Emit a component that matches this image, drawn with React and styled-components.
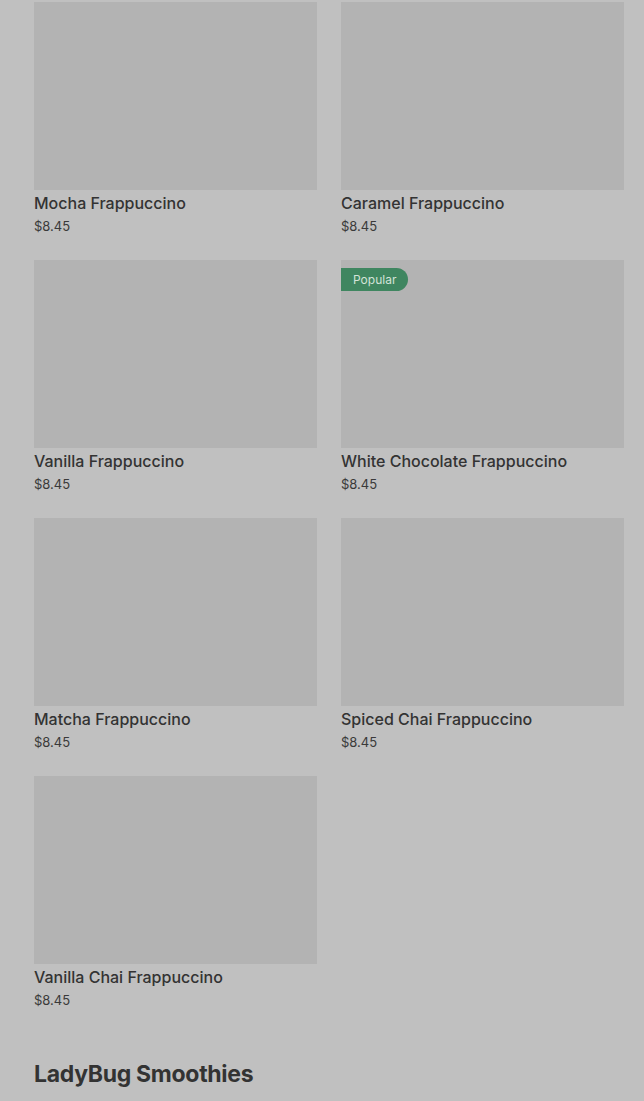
import styled, { createGlobalStyle } from "styled-components";

const items = [
    { name: "Mocha Frappuccino", price: "$8.45" },
    { name: "Caramel Frappuccino", price: "$8.45" },
    { name: "Vanilla Frappuccino", price: "$8.45" },
    { name: "White Chocolate Frappuccino", price: "$8.45", popular: true },
    { name: "Matcha Frappuccino", price: "$8.45" },
    { name: "Spiced Chai Frappuccino", price: "$8.45" },
    { name: "Vanilla Chai Frappuccino", price: "$8.45" },
];

export default function App() {
    return (
        <>
            <GlobalStyle />
            <Page>
                <Grid>
                    {items.map(item =>
                    <Card key={item.name}>
                        <Thumb>
                            {item.popular ? <Badge>Popular</Badge> : ""}
                        </Thumb>
                        <Name>{item.name}</Name>
                        <Price>{item.price}</Price>
                    </Card>
                    )}
                </Grid>
                <Section>LadyBug Smoothies</Section>
            </Page>
        </>
    )
}

const GlobalStyle = createGlobalStyle`
    body {
        margin: 0;
        background: #c0c0c0;
        font-family: Inter, "Noto Sans", sans-serif;
    }
`;

const Page = styled.main`
    padding: 2px 20px 40px 34px;
`;

const Grid = styled.div`
    display: grid;
    grid-template-columns: 283px 283px;
    column-gap: 24px;
    row-gap: 22px;
`;

const Card = styled.div`
    display: flex;
    flex-direction: column;
`;

const Thumb = styled.div`
    position: relative;
    height: 188px;
    background: #b3b3b3;
`;

const Badge = styled.span`
    position: absolute;
    top: 8px;
    left: 0;
    height: 23px;
    padding: 0 12px;
    display: flex;
    align-items: center;
    background: #3f8660;
    color: #d3e3d8;
    font-size: 12px;
    border-radius: 0 12px 12px 0;
`;

const Name = styled.p`
    margin: 1px 0 0;
    font-size: 16px;
    line-height: 24px;
    font-weight: 500;
    color: #333333;
`;

const Price = styled.p`
    margin: 0;
    font-size: 13px;
    line-height: 23px;
    color: #3a3a3a;
`;

const Section = styled.h2`
    margin: 46px 0 0;
    font-size: 23px;
    line-height: 32px;
    font-weight: 700;
    letter-spacing: -0.3px;
    color: #333333;
`;
